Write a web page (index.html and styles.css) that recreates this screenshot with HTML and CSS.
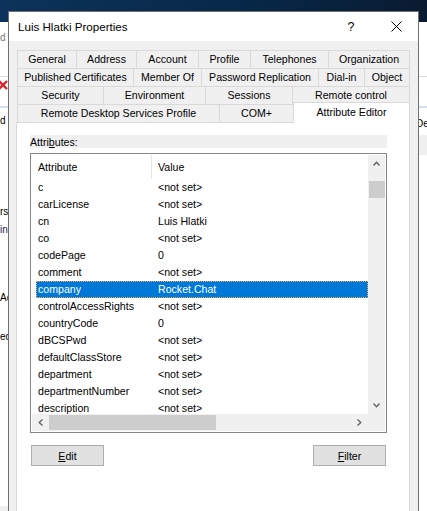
FILE: index.html
```html
<!DOCTYPE html>
<html lang="en">
<head>
    <meta charset="UTF-8">
    <title>Luis Hlatki Properties</title>
    <link rel="stylesheet" href="styles.css">
</head>
<body>
    <div class="desktop">
        <div class="desk-band"></div>
        <div class="desk-rule"></div>
        <div class="desk-rule-blue"></div>
        <span class="frag frag-top">d</span>
        <svg class="frag-x" width="10" height="10" viewBox="0 0 10 10">
            <path d="M1 1 L9 9 M9 1 L1 9" stroke="#d9232e" stroke-width="2.4"/>
        </svg>
        <span class="frag frag-d">d</span>
        <span class="frag frag-users">rs</span>
        <span class="frag frag-admin">in</span>
        <span class="frag frag-acc">Ac</span>
        <span class="frag frag-allowed">ed</span>
        <span class="frag frag-desc">De</span>
        <div class="frag-box"></div>
        <div class="frag-corner"></div>

        <div class="dialog">
            <div class="titlebar">
                <span class="title">Luis Hlatki Properties</span>
                <span class="tb-btn help">?</span>
                <span class="tb-btn close">
                    <svg width="11" height="11" viewBox="0 0 11 11">
                        <path d="M0.5 0.5 L10.5 10.5 M10.5 0.5 L0.5 10.5" stroke="#000" stroke-width="1"/>
                    </svg>
                </span>
            </div>
            <div class="dialog-body">
                <div class="tabs">
                    <div class="tab-row row-1">
                        <div class="tab">General</div>
                        <div class="tab">Address</div>
                        <div class="tab">Account</div>
                        <div class="tab">Profile</div>
                        <div class="tab">Telephones</div>
                        <div class="tab">Organization</div>
                    </div>
                    <div class="tab-row row-2">
                        <div class="tab">Published Certificates</div>
                        <div class="tab">Member Of</div>
                        <div class="tab">Password Replication</div>
                        <div class="tab">Dial-in</div>
                        <div class="tab">Object</div>
                    </div>
                    <div class="tab-row row-3">
                        <div class="tab">Security</div>
                        <div class="tab">Environment</div>
                        <div class="tab">Sessions</div>
                        <div class="tab">Remote control</div>
                    </div>
                    <div class="tab-row row-4">
                        <div class="tab">Remote Desktop Services Profile</div>
                        <div class="tab">COM+</div>
                        <div class="tab selected">Attribute Editor</div>
                    </div>
                </div>
                <div class="panel">
                    <div class="field-label">Attri<u>b</u>utes:</div>
                    <div class="listview">
                        <div class="lv-main">
                            <div class="lv-content">
                                <div class="lv-header">
                                    <div class="c1">Attribute</div>
                                    <div class="c2">Value</div>
                                </div>
                                <div class="lv-row"><div class="c1">c</div><div class="c2">&lt;not set&gt;</div></div>
                                <div class="lv-row"><div class="c1">carLicense</div><div class="c2">&lt;not set&gt;</div></div>
                                <div class="lv-row"><div class="c1">cn</div><div class="c2">Luis Hlatki</div></div>
                                <div class="lv-row"><div class="c1">co</div><div class="c2">&lt;not set&gt;</div></div>
                                <div class="lv-row"><div class="c1">codePage</div><div class="c2">0</div></div>
                                <div class="lv-row"><div class="c1">comment</div><div class="c2">&lt;not set&gt;</div></div>
                                <div class="lv-row selected"><div class="c1">company</div><div class="c2">Rocket.Chat</div></div>
                                <div class="lv-row"><div class="c1">controlAccessRights</div><div class="c2">&lt;not set&gt;</div></div>
                                <div class="lv-row"><div class="c1">countryCode</div><div class="c2">0</div></div>
                                <div class="lv-row"><div class="c1">dBCSPwd</div><div class="c2">&lt;not set&gt;</div></div>
                                <div class="lv-row"><div class="c1">defaultClassStore</div><div class="c2">&lt;not set&gt;</div></div>
                                <div class="lv-row"><div class="c1">department</div><div class="c2">&lt;not set&gt;</div></div>
                                <div class="lv-row"><div class="c1">departmentNumber</div><div class="c2">&lt;not set&gt;</div></div>
                                <div class="lv-row"><div class="c1">description</div><div class="c2">&lt;not set&gt;</div></div>
                            </div>
                            <div class="vscroll">
                                <div class="sb-arrow">
                                    <svg width="7" height="5" viewBox="0 0 7 5"><path d="M0.5 4.5 L3.5 1.2 L6.5 4.5" fill="none" stroke="#606060" stroke-width="1.3"/></svg>
                                </div>
                                <div class="sb-track"><div class="thumb"></div></div>
                                <div class="sb-arrow">
                                    <svg width="7" height="5" viewBox="0 0 7 5"><path d="M0.5 0.5 L3.5 3.8 L6.5 0.5" fill="none" stroke="#606060" stroke-width="1.3"/></svg>
                                </div>
                            </div>
                        </div>
                        <div class="lv-bottom">
                            <div class="hscroll">
                                <div class="sb-arrow">
                                    <svg width="5" height="7" viewBox="0 0 5 7"><path d="M4.5 0.5 L1.2 3.5 L4.5 6.5" fill="none" stroke="#606060" stroke-width="1.3"/></svg>
                                </div>
                                <div class="sb-track"><div class="thumb"></div></div>
                                <div class="sb-arrow">
                                    <svg width="5" height="7" viewBox="0 0 5 7"><path d="M0.5 0.5 L3.8 3.5 L0.5 6.5" fill="none" stroke="#606060" stroke-width="1.3"/></svg>
                                </div>
                            </div>
                            <div class="corner"></div>
                        </div>
                    </div>
                    <div class="buttons">
                        <button class="btn"><u>E</u>dit</button>
                        <button class="btn"><u>F</u>ilter</button>
                    </div>
                </div>
            </div>
        </div>
    </div>
</body>
</html>
```

FILE: styles.css
```css
* {
    box-sizing: border-box;
}
body {
    margin: 0;
    width: 427px;
    height: 511px;
    overflow: hidden;
    background: #fff;
    font-family: "Liberation Sans", Arial, sans-serif;
    color: #000;
}
.desktop {
    position: relative;
    width: 427px;
    height: 511px;
    overflow: hidden;
    background: #fff;
}
.desk-band {
    height: 22px;
    background: linear-gradient(90deg, #0c335b, #072747 60%, #0a1b31);
}
.desk-rule {
    position: absolute;
    top: 76px;
    left: 0;
    right: 0;
    height: 1px;
    background: #dcdcdc;
}
.desk-rule-blue {
    position: absolute;
    top: 106px;
    left: 0;
    right: 0;
    height: 2px;
    background: #d3dfec;
}
.frag {
    position: absolute;
    font-size: 10px;
    line-height: 13px;
    white-space: nowrap;
}
.frag-top {
    top: 31px;
    left: 0;
    color: #777;
}
.frag-x {
    position: absolute;
    top: 80px;
    left: -2px;
}
.frag-d {
    top: 114px;
    left: 0;
}
.frag-users {
    top: 205px;
    left: 0;
}
.frag-admin {
    top: 223px;
    left: 0;
    color: #1c1c4a;
}
.frag-acc {
    top: 291px;
    left: 0;
}
.frag-allowed {
    top: 330px;
    left: 0;
}
.frag-desc {
    top: 117px;
    left: 416px;
}
.frag-box {
    position: absolute;
    top: 135px;
    left: 419px;
    width: 8px;
    height: 20px;
    background: #f0f0f0;
}
.frag-corner {
    position: absolute;
    top: 506px;
    left: 0;
    width: 8px;
    height: 5px;
    background: #f0f0f0;
}

/* dialog window */
.dialog {
    position: absolute;
    left: 8px;
    top: 11px;
    width: 411px;
    height: 510px;
    border: 1px solid #707070;
    border-bottom: none;
    background: #f0f0f0;
    display: flex;
    flex-direction: column;
    z-index: 1;
}
.titlebar {
    height: 29px;
    background: #fff;
    display: flex;
    align-items: center;
}
.title {
    flex: 1;
    padding-left: 9px;
    font-size: 11.6px;
}
.tb-btn {
    height: 29px;
    display: flex;
    align-items: center;
    justify-content: center;
}
.help {
    width: 46px;
    font-size: 12.5px;
}
.close {
    width: 44px;
}
.dialog-body {
    flex: 1;
    padding: 9px 8px 0 7px;
    display: flex;
    flex-direction: column;
}

/* tabs */
.tabs {
    margin-left: 1px;
    display: flex;
    flex-direction: column;
}
.tab-row {
    display: grid;
    grid-template-rows: 18px;
    height: 18px;
}
.row-1 {
    grid-template-columns: 60px 60px 62px 52px 78px 81px;
}
.row-2 {
    grid-template-columns: 117px 68px 117px 46px 45px;
}
.row-3 {
    grid-template-columns: 87px 102px 87px 117px;
}
.row-4 {
    grid-template-columns: 203px 74px 116px;
}
.tab {
    border-top: 1px solid #d9d9d9;
    border-right: 1px solid #d9d9d9;
    background: #f0f0f0;
    text-align: center;
    font-size: 10.6px;
    line-height: 17px;
    white-space: nowrap;
}
.tab:first-child {
    border-left: 1px solid #d9d9d9;
}
.tab.selected {
    position: relative;
    z-index: 2;
    height: 21px;
    margin: -2px 0 -1px -1px;
    border-left: 1px solid #d9d9d9;
    background: #fff;
    line-height: 18px;
}

/* tab page */
.panel {
    flex: 1;
    background: #fff;
    border: 1px solid #d9d9d9;
    border-bottom: none;
    padding: 12px 22px 0 13px;
}
.field-label {
    height: 13px;
    line-height: 14px;
    background: #f0f0f0;
    font-size: 10.6px;
}
.listview {
    margin-top: 5px;
    height: 280px;
    border: 1px solid #828790;
    padding: 1px;
    background: #fff;
    display: flex;
    flex-direction: column;
    font-size: 10.6px;
}
.lv-main {
    display: flex;
    height: 259px;
}
.lv-content {
    flex: 1;
    overflow: hidden;
}
.lv-header {
    display: flex;
    height: 24px;
    line-height: 24px;
}
.lv-header .c1 {
    width: 120px;
    padding-left: 6px;
    border-right: 1px solid #e5e5e5;
}
.lv-header .c2 {
    padding-left: 6px;
}
.lv-row {
    display: flex;
    height: 17px;
    line-height: 17px;
    margin-left: 4px;
    white-space: nowrap;
}
.lv-row .c1 {
    width: 116px;
    padding-left: 2px;
}
.lv-row .c2 {
    padding-left: 6px;
}
.lv-row.selected {
    background: #0078d7;
    color: #fff;
    outline: 1px dotted #f2a65a;
    outline-offset: -1px;
}

/* scrollbars */
.vscroll {
    width: 17px;
    background: #f0f0f0;
    display: flex;
    flex-direction: column;
}
.sb-arrow {
    width: 17px;
    height: 17px;
    display: flex;
    align-items: center;
    justify-content: center;
}
.sb-arrow svg {
    display: block;
}
.vscroll .sb-track {
    flex: 1;
    padding-top: 9px;
}
.thumb {
    background: #cdcdcd;
}
.vscroll .thumb {
    height: 17px;
    margin-left: 1px;
}
.lv-bottom {
    display: flex;
    height: 17px;
}
.hscroll {
    flex: 1;
    display: flex;
    background: #f0f0f0;
}
.hscroll .sb-track {
    flex: 1;
    padding: 1px 0;
}
.hscroll .thumb {
    width: 167px;
    height: 100%;
}
.corner {
    width: 17px;
    background: #f0f0f0;
}

/* buttons */
.buttons {
    margin-top: 12px;
    padding: 0 1px;
    display: flex;
    justify-content: space-between;
}
.btn {
    width: 73px;
    height: 21px;
    padding: 0;
    background: #e1e1e1;
    border: 1px solid #adadad;
    border-radius: 0;
    font-family: "Liberation Sans", Arial, sans-serif;
    font-size: 10.6px;
    color: #000;
}
```
